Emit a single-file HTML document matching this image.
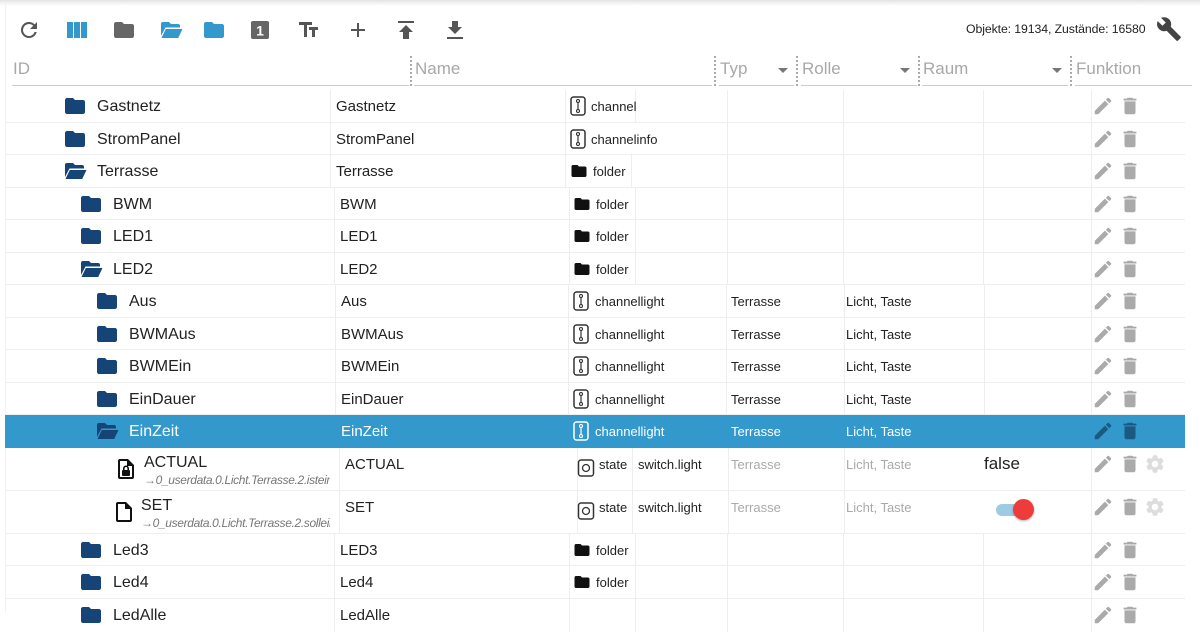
<!DOCTYPE html>
<html><head><meta charset="utf-8"><style>
*{box-sizing:border-box;margin:0;padding:0}
body{width:1200px;height:613px;overflow:hidden;background:#fff;font-family:"Liberation Sans",Roboto,sans-serif;color:#222;position:relative}
.top{position:absolute;left:0;top:0;width:1200px;height:6px;background:linear-gradient(#e4e4e4,#fff)}
.ab{position:absolute}
.tb svg{position:absolute;top:18px;width:24px;height:24px}
.hd{position:absolute;top:58px;height:28px;font-size:17px;color:#a8a8a8;border-bottom:1.5px solid #ccc;padding-left:1px;padding-top:1px}
.sep{position:absolute;top:56px;height:30px;border-left:2px dotted #aaa}
.arr{position:absolute;top:68px;width:0;height:0;border-left:5px solid transparent;border-right:5px solid transparent;border-top:5px solid #777}
.row{position:absolute;left:5px;width:1180px;border-bottom:1px solid #eee}
.row .c{position:absolute;top:0;bottom:0;border-left:1px solid #eee}
.row span{position:absolute;white-space:nowrap}
.nm{font-size:16px;top:8px!important}
.sm{font-size:13px}
.gr{color:#aaa}
.sel{background:#3399cc;color:#fff}
.fi{position:absolute;width:24px;height:24px}
.ti{position:absolute;width:18px;height:22px}
.act svg{position:absolute;width:22px;height:22px}
.sub{font-size:12px;font-style:italic;color:#777;overflow:hidden;letter-spacing:-0.35px}
</style></head><body>
<svg width="0" height="0" style="position:absolute">
<defs>
<symbol id="fold" viewBox="0 0 24 24"><path d="M10 4H4c-1.1 0-2 .9-2 2v12c0 1.1.9 2 2 2h16c1.1 0 2-.9 2-2V8c0-1.1-.9-2-2-2h-8l-2-2z"/></symbol>
<symbol id="open" viewBox="0 0 24 24"><path d="M2 6a2 2 0 0 1 2-2h6l2 2h7a2 2 0 0 1 2 2v1.5H6.5L2 18z M6.8 11H23.5l-4.3 9H2.5z"/></symbol>
<symbol id="chan" viewBox="0 0 18 22"><rect x="2" y="2" width="14" height="18" rx="2.5" fill="none" stroke="currentColor" stroke-width="1.5"/><circle cx="9" cy="6" r="1.5" fill="none" stroke="currentColor" stroke-width="1.1"/><circle cx="9" cy="16" r="1.5" fill="none" stroke="currentColor" stroke-width="1.1"/><path d="M9 7.5V14.5" stroke="currentColor" stroke-width="1.2"/></symbol>
<symbol id="state" viewBox="0 0 18 22"><rect x="1.5" y="3" width="15" height="16" rx="2.5" fill="none" stroke="currentColor" stroke-width="1.5"/><circle cx="9" cy="11" r="3.5" fill="none" stroke="currentColor" stroke-width="1.3"/></symbol>
<symbol id="pen" viewBox="0 0 24 24"><path d="M3 17.25V21h3.75L17.81 9.94l-3.75-3.75L3 17.25zM20.71 7.04a1 1 0 0 0 0-1.41l-2.34-2.34a1 1 0 0 0-1.41 0l-1.83 1.830 3.75 3.75 1.83-1.83z"/></symbol>
<symbol id="del" viewBox="0 0 24 24"><path d="M6 19c0 1.1.9 2 2 2h8c1.1 0 2-.9 2-2V7H6v12zM19 4h-3.5l-1-1h-5l-1 1H5v2h14V4z"/></symbol>
<symbol id="gear" viewBox="0 0 24 24"><path d="M19.14 12.94a7.1 7.1 0 0 0 0-1.88l2.03-1.58a.5.5 0 0 0 .12-.61l-1.920-3.32a.5.5 0 0 0-.59-.22l-2.39.96a7 7 0 0 0-1.62-.94l-.36-2.54A.5.5 0 0 0 13.9 2.4h-3.84a.5.5 0 0 0-.48.41l-.36 2.54a7.4 7.4 0 0 0-1.62.94l-2.39-.96a.5.5 0 0 0-.59.22L2.7 8.87a.5.5 0 0 0 .12.61l2.03 1.58a7.1 7.1 0 0 0 0 1.88l-2.03 1.58a.5.5 0 0 0-.12.61l1.92 3.32c.12.22.37.29.59.22l2.39-.96c.5.38 1.04.7 1.62.94l.36 2.54c.05.24.25.41.48.41h3.84c.24 0 .44-.17.47-.41l.36-2.54a7 7 0 0 0 1.62-.94l2.39.96c.22.08.47 0 .59-.22l1.92-3.32a.5.5 0 0 0-.12-.61zM12 15.6A3.6 3.6 0 1 1 12 8.4a3.6 3.6 0 0 1 0 7.2z"/></symbol>
<symbol id="file" viewBox="0 0 24 24"><path d="M6 2h8l6 6v12a2 2 0 0 1-2 2H6a2 2 0 0 1-2-2V4a2 2 0 0 1 2-2zm0 2v16h12V9h-5V4z"/></symbol>
<symbol id="lockf" viewBox="0 0 24 24"><path d="M6 2h8l6 6v12a2 2 0 0 1-2 2H6a2 2 0 0 1-2-2V4a2 2 0 0 1 2-2zm0 2v16h12V9h-5V4z"/><rect x="8" y="13" width="8" height="6" rx="1"/><path d="M9.8 13v-1.5a2.2 2.2 0 0 1 4.4 0V13" fill="none" stroke="#000" stroke-width="1.5"/></symbol>
</defs></svg>
<div class="top"></div>
<div class="ab" style="left:5px;top:4px;width:1185px;height:609px;border-left:1px solid #f2f2f2"></div>
<div class="tb">
<svg style="left:17px" viewBox="0 0 24 24" fill="#555"><path d="M17.65 6.35A7.96 7.96 0 0 0 12 4a8 8 0 1 0 7.73 10h-2.08A6 6 0 1 1 12 6c1.66 0 3.14.69 4.22 1.78L13 11h7V4l-2.35 2.35z"/></svg>
<svg style="left:65px" viewBox="0 0 24 24" fill="#3399cc"><rect x="2" y="4" width="6" height="16"/><rect x="9" y="4" width="6" height="16"/><rect x="16" y="4" width="6" height="16"/></svg>
<svg style="left:112px" viewBox="0 0 24 24" fill="#666"><use href="#fold"/></svg>
<svg style="left:159px" viewBox="0 0 24 24" fill="#3399cc"><use href="#open"/></svg>
<svg style="left:202px" viewBox="0 0 24 24" fill="#3399cc"><use href="#fold"/></svg>
<svg style="left:248px" viewBox="0 0 24 24"><rect x="3" y="3" width="18" height="18" rx="2" fill="#666"/><text x="12" y="17.5" font-size="14" font-weight="bold" fill="#fff" text-anchor="middle" font-family="Liberation Sans">1</text></svg>
<svg style="left:297px" viewBox="0 0 24 24" fill="#555"><path d="M2 4v3h5v12h3V7h5V4H2zm19 5h-9v3h3v7h3v-7h3V9z"/></svg>
<svg style="left:346px" viewBox="0 0 24 24" fill="#555"><path d="M19 13h-6v6h-2v-6H5v-2h6V5h2v6h6v2z"/></svg>
<svg style="left:394px" viewBox="0 0 24 24" fill="#555"><path d="M4 3h16v2H4zM12 7l-7 7h4v7h6v-7h4z"/></svg>
<svg style="left:443px" viewBox="0 0 24 24" fill="#555"><path d="M19 9h-4V3H9v6H5l7 7 7-7zM4 19v2h16v-2z"/></svg>
</div>
<div class="ab" style="left:966px;top:22px;font-size:12.3px;color:#222;letter-spacing:-0.1px">Objekte: 19134, Zustände: 16580</div>
<svg class="ab" style="left:1156px;top:16px;width:26px;height:26px" viewBox="0 0 24 24" fill="#444"><path d="M22.7 19l-9.1-9.1c.9-2.3.4-5-1.5-6.9-2-2-5-2.4-7.4-1.3L9 6 6 9 1.6 4.7C.4 7.1.9 10.1 2.9 12.1c1.9 1.9 4.6 2.4 6.9 1.5l9.1 9.1c.4.4 1 .4 1.4 0l2.3-2.3c.5-.4.5-1.1.1-1.4z"/></svg>

<div class="hd" style="left:12px;width:397px">ID</div>
<div class="sep" style="left:410px"></div>
<div class="hd" style="left:414px;width:298px">Name</div>
<div class="sep" style="left:714px"></div>
<div class="hd" style="left:719px;width:75px">Typ</div><div class="arr" style="left:778px"></div>
<div class="sep" style="left:796px"></div>
<div class="hd" style="left:801px;width:116px">Rolle</div><div class="arr" style="left:900px"></div>
<div class="sep" style="left:918px"></div>
<div class="hd" style="left:922px;width:146px">Raum</div><div class="arr" style="left:1052px"></div>
<div class="sep" style="left:1070px"></div>
<div class="hd" style="left:1075px;width:117px">Funktion</div>

<div class="row" style="top:90px;height:33px"><div class="c" style="left:325px"></div><div class="c" style="left:560px"></div><div class="c" style="left:630px"></div><div class="c" style="left:722px"></div><div class="c" style="left:838px"></div><div class="c" style="left:978px"></div><div class="c" style="left:1086px"></div>
<svg class="fi" style="left:58px;top:4px" fill="#164477"><use href="#fold"/></svg><span class="nm" style="left:92px">Gastnetz</span><span class="nm" style="left:331px;font-size:15px">Gastnetz</span><svg class="ti" style="left:564px;top:5px;color:#333"><use href="#chan"/></svg><span class="sm" style="left:586px;top:9px">channel</span>
<div class="act"><svg style="left:1087px;top:5px" fill="#aaa"><use href="#pen"/></svg><svg style="left:1114px;top:5px" fill="#aaa"><use href="#del"/></svg></div></div>

<div class="row" style="top:123px;height:32px"><div class="c" style="left:325px"></div><div class="c" style="left:560px"></div><div class="c" style="left:722px"></div><div class="c" style="left:838px"></div><div class="c" style="left:978px"></div><div class="c" style="left:1086px"></div>
<svg class="fi" style="left:58px;top:4px" fill="#164477"><use href="#fold"/></svg><span class="nm" style="left:92px">StromPanel</span><span class="nm" style="left:331px;font-size:15px">StromPanel</span><svg class="ti" style="left:564px;top:5px;color:#333"><use href="#chan"/></svg><span class="sm" style="left:586px;top:9px">channelinfo</span>
<div class="act"><svg style="left:1087px;top:5px" fill="#aaa"><use href="#pen"/></svg><svg style="left:1114px;top:5px" fill="#aaa"><use href="#del"/></svg></div></div>

<div class="row" style="top:155px;height:33px"><div class="c" style="left:325px"></div><div class="c" style="left:560px"></div><div class="c" style="left:626px"></div><div class="c" style="left:722px"></div><div class="c" style="left:838px"></div><div class="c" style="left:978px"></div><div class="c" style="left:1086px"></div>
<svg class="fi" style="left:58px;top:4px" fill="#164477"><use href="#open"/></svg><span class="nm" style="left:92px">Terrasse</span><span class="nm" style="left:331px;font-size:15px">Terrasse</span><svg class="fi" style="left:565px;top:7px;width:18px;height:18px" fill="#111"><use href="#fold"/></svg><span class="sm" style="left:588px;top:9px">folder</span>
<div class="act"><svg style="left:1087px;top:5px" fill="#aaa"><use href="#pen"/></svg><svg style="left:1114px;top:5px" fill="#aaa"><use href="#del"/></svg></div></div>

<div class="row" style="top:188px;height:32px"><div class="c" style="left:329px"></div><div class="c" style="left:564px"></div><div class="c" style="left:630px"></div><div class="c" style="left:722px"></div><div class="c" style="left:838px"></div><div class="c" style="left:978px"></div><div class="c" style="left:1086px"></div>
<svg class="fi" style="left:74px;top:4px" fill="#164477"><use href="#fold"/></svg><span class="nm" style="left:108px">BWM</span><span class="nm" style="left:335px;font-size:15px">BWM</span><svg class="fi" style="left:568px;top:7px;width:18px;height:18px" fill="#111"><use href="#fold"/></svg><span class="sm" style="left:591px;top:9px">folder</span>
<div class="act"><svg style="left:1087px;top:5px" fill="#aaa"><use href="#pen"/></svg><svg style="left:1114px;top:5px" fill="#aaa"><use href="#del"/></svg></div></div>

<div class="row" style="top:220px;height:33px"><div class="c" style="left:329px"></div><div class="c" style="left:564px"></div><div class="c" style="left:630px"></div><div class="c" style="left:722px"></div><div class="c" style="left:838px"></div><div class="c" style="left:978px"></div><div class="c" style="left:1086px"></div>
<svg class="fi" style="left:74px;top:4px" fill="#164477"><use href="#fold"/></svg><span class="nm" style="left:108px">LED1</span><span class="nm" style="left:335px;font-size:15px">LED1</span><svg class="fi" style="left:568px;top:7px;width:18px;height:18px" fill="#111"><use href="#fold"/></svg><span class="sm" style="left:591px;top:9px">folder</span>
<div class="act"><svg style="left:1087px;top:5px" fill="#aaa"><use href="#pen"/></svg><svg style="left:1114px;top:5px" fill="#aaa"><use href="#del"/></svg></div></div>

<div class="row" style="top:253px;height:32px"><div class="c" style="left:329px"></div><div class="c" style="left:564px"></div><div class="c" style="left:630px"></div><div class="c" style="left:722px"></div><div class="c" style="left:838px"></div><div class="c" style="left:978px"></div><div class="c" style="left:1086px"></div>
<svg class="fi" style="left:74px;top:4px" fill="#164477"><use href="#open"/></svg><span class="nm" style="left:108px">LED2</span><span class="nm" style="left:335px;font-size:15px">LED2</span><svg class="fi" style="left:568px;top:7px;width:18px;height:18px" fill="#111"><use href="#fold"/></svg><span class="sm" style="left:591px;top:9px">folder</span>
<div class="act"><svg style="left:1087px;top:5px" fill="#aaa"><use href="#pen"/></svg><svg style="left:1114px;top:5px" fill="#aaa"><use href="#del"/></svg></div></div>

<div class="row" style="top:285px;height:33px"><div class="c" style="left:330px"></div><div class="c" style="left:563px"></div><div class="c" style="left:721px"></div><div class="c" style="left:839px"></div><div class="c" style="left:979px"></div><div class="c" style="left:1086px"></div>
<svg class="fi" style="left:90px;top:4px" fill="#164477"><use href="#fold"/></svg><span class="nm" style="left:124px">Aus</span><span class="nm" style="left:336px;font-size:15px">Aus</span><svg class="ti" style="left:567px;top:5px;color:#333"><use href="#chan"/></svg><span class="sm" style="left:590px;top:9px">channellight</span><span class="sm" style="left:726px;top:9px">Terrasse</span><span class="sm" style="left:841px;top:9px">Licht, Taste</span>
<div class="act"><svg style="left:1087px;top:5px" fill="#aaa"><use href="#pen"/></svg><svg style="left:1114px;top:5px" fill="#aaa"><use href="#del"/></svg></div></div>

<div class="row" style="top:318px;height:32px"><div class="c" style="left:330px"></div><div class="c" style="left:563px"></div><div class="c" style="left:721px"></div><div class="c" style="left:839px"></div><div class="c" style="left:979px"></div><div class="c" style="left:1086px"></div>
<svg class="fi" style="left:90px;top:4px" fill="#164477"><use href="#fold"/></svg><span class="nm" style="left:124px">BWMAus</span><span class="nm" style="left:336px;font-size:15px">BWMAus</span><svg class="ti" style="left:567px;top:5px;color:#333"><use href="#chan"/></svg><span class="sm" style="left:590px;top:9px">channellight</span><span class="sm" style="left:726px;top:9px">Terrasse</span><span class="sm" style="left:841px;top:9px">Licht, Taste</span>
<div class="act"><svg style="left:1087px;top:5px" fill="#aaa"><use href="#pen"/></svg><svg style="left:1114px;top:5px" fill="#aaa"><use href="#del"/></svg></div></div>

<div class="row" style="top:350px;height:33px"><div class="c" style="left:330px"></div><div class="c" style="left:563px"></div><div class="c" style="left:721px"></div><div class="c" style="left:839px"></div><div class="c" style="left:979px"></div><div class="c" style="left:1086px"></div>
<svg class="fi" style="left:90px;top:4px" fill="#164477"><use href="#fold"/></svg><span class="nm" style="left:124px">BWMEin</span><span class="nm" style="left:336px;font-size:15px">BWMEin</span><svg class="ti" style="left:567px;top:5px;color:#333"><use href="#chan"/></svg><span class="sm" style="left:590px;top:9px">channellight</span><span class="sm" style="left:726px;top:9px">Terrasse</span><span class="sm" style="left:841px;top:9px">Licht, Taste</span>
<div class="act"><svg style="left:1087px;top:5px" fill="#aaa"><use href="#pen"/></svg><svg style="left:1114px;top:5px" fill="#aaa"><use href="#del"/></svg></div></div>

<div class="row" style="top:383px;height:32px"><div class="c" style="left:330px"></div><div class="c" style="left:563px"></div><div class="c" style="left:721px"></div><div class="c" style="left:839px"></div><div class="c" style="left:979px"></div><div class="c" style="left:1086px"></div>
<svg class="fi" style="left:90px;top:4px" fill="#164477"><use href="#fold"/></svg><span class="nm" style="left:124px">EinDauer</span><span class="nm" style="left:336px;font-size:15px">EinDauer</span><svg class="ti" style="left:567px;top:5px;color:#333"><use href="#chan"/></svg><span class="sm" style="left:590px;top:9px">channellight</span><span class="sm" style="left:726px;top:9px">Terrasse</span><span class="sm" style="left:841px;top:9px">Licht, Taste</span>
<div class="act"><svg style="left:1087px;top:5px" fill="#aaa"><use href="#pen"/></svg><svg style="left:1114px;top:5px" fill="#aaa"><use href="#del"/></svg></div></div>

<div class="row sel" style="top:415px;height:33px;border-bottom:none">
<svg class="fi" style="left:90px;top:4px" fill="#164477"><use href="#open"/></svg><span class="nm" style="left:124px">EinZeit</span><span class="nm" style="left:336px;font-size:15px">EinZeit</span><svg class="ti" style="left:567px;top:5px;color:#fff"><use href="#chan"/></svg><span class="sm" style="left:590px;top:9px">channellight</span><span class="sm" style="left:726px;top:9px">Terrasse</span><span class="sm" style="left:841px;top:9px">Licht, Taste</span>
<div class="act"><svg style="left:1087px;top:5px" fill="#1a5a80"><use href="#pen"/></svg><svg style="left:1114px;top:5px" fill="#1a5a80"><use href="#del"/></svg></div></div>

<div class="row" style="top:448px;height:43px"><div class="c" style="left:334px"></div><div class="c" style="left:572px"></div><div class="c" style="left:627px"></div><div class="c" style="left:723px"></div><div class="c" style="left:839px"></div><div class="c" style="left:1086px"></div>
<svg class="fi" style="left:109px;top:9px" fill="#111"><use href="#lockf"/></svg><span class="nm" style="left:139px;top:6px!important">ACTUAL</span><span class="sub" style="left:139px;top:25px;width:186px">→0_userdata.0.Licht.Terrasse.2.isteinzeit</span><span class="nm" style="left:340px;font-size:15px">ACTUAL</span><svg class="ti" style="left:572px;top:9px;color:#333"><use href="#state"/></svg><span class="sm" style="left:594px;top:9px">state</span><span class="sm" style="left:633px;top:9px">switch.light</span><span class="sm gr" style="left:726px;top:9px">Terrasse</span><span class="sm gr" style="left:841px;top:9px">Licht, Taste</span><span style="left:979px;top:6px;font-size:17px">false</span>
<div class="act"><svg style="left:1087px;top:5px" fill="#aaa"><use href="#pen"/></svg><svg style="left:1114px;top:5px" fill="#aaa"><use href="#del"/></svg><svg style="left:1139px;top:5px" fill="#ddd"><use href="#gear"/></svg></div></div>

<div class="row" style="top:491px;height:43px"><div class="c" style="left:334px"></div><div class="c" style="left:572px"></div><div class="c" style="left:627px"></div><div class="c" style="left:723px"></div><div class="c" style="left:839px"></div><div class="c" style="left:1086px"></div>
<svg class="fi" style="left:107px;top:9px" fill="#111"><use href="#file"/></svg><span class="nm" style="left:136px;top:6px!important">SET</span><span class="sub" style="left:136px;top:25px;width:189px">→0_userdata.0.Licht.Terrasse.2.solleinzeit</span><span class="nm" style="left:340px;font-size:15px">SET</span><svg class="ti" style="left:572px;top:9px;color:#333"><use href="#state"/></svg><span class="sm" style="left:594px;top:9px">state</span><span class="sm" style="left:633px;top:9px">switch.light</span><span class="sm gr" style="left:726px;top:9px">Terrasse</span><span class="sm gr" style="left:841px;top:9px">Licht, Taste</span>
<div class="ab" style="left:991px;top:13px;width:30px;height:12px;border-radius:6px;background:#9ccbe3"></div><div class="ab" style="left:1008px;top:8px;width:21px;height:21px;border-radius:50%;background:#ee3b3b;box-shadow:0 1px 2px rgba(0,0,0,.3)"></div>
<div class="act"><svg style="left:1087px;top:5px" fill="#aaa"><use href="#pen"/></svg><svg style="left:1114px;top:5px" fill="#aaa"><use href="#del"/></svg><svg style="left:1139px;top:5px" fill="#ddd"><use href="#gear"/></svg></div></div>

<div class="row" style="top:534px;height:32px"><div class="c" style="left:329px"></div><div class="c" style="left:564px"></div><div class="c" style="left:630px"></div><div class="c" style="left:722px"></div><div class="c" style="left:838px"></div><div class="c" style="left:978px"></div><div class="c" style="left:1086px"></div>
<svg class="fi" style="left:74px;top:4px" fill="#164477"><use href="#fold"/></svg><span class="nm" style="left:108px">Led3</span><span class="nm" style="left:335px;font-size:15px">LED3</span><svg class="fi" style="left:568px;top:7px;width:18px;height:18px" fill="#111"><use href="#fold"/></svg><span class="sm" style="left:591px;top:9px">folder</span>
<div class="act"><svg style="left:1087px;top:5px" fill="#aaa"><use href="#pen"/></svg><svg style="left:1114px;top:5px" fill="#aaa"><use href="#del"/></svg></div></div>

<div class="row" style="top:566px;height:33px"><div class="c" style="left:329px"></div><div class="c" style="left:564px"></div><div class="c" style="left:630px"></div><div class="c" style="left:722px"></div><div class="c" style="left:838px"></div><div class="c" style="left:978px"></div><div class="c" style="left:1086px"></div>
<svg class="fi" style="left:74px;top:4px" fill="#164477"><use href="#fold"/></svg><span class="nm" style="left:108px">Led4</span><span class="nm" style="left:335px;font-size:15px">Led4</span><svg class="fi" style="left:568px;top:7px;width:18px;height:18px" fill="#111"><use href="#fold"/></svg><span class="sm" style="left:591px;top:9px">folder</span>
<div class="act"><svg style="left:1087px;top:5px" fill="#aaa"><use href="#pen"/></svg><svg style="left:1114px;top:5px" fill="#aaa"><use href="#del"/></svg></div></div>

<div class="row" style="top:599px;height:33px;border:none"><div class="c" style="left:329px"></div><div class="c" style="left:564px"></div><div class="c" style="left:630px"></div><div class="c" style="left:722px"></div><div class="c" style="left:838px"></div><div class="c" style="left:978px"></div><div class="c" style="left:1086px"></div>
<svg class="fi" style="left:74px;top:4px" fill="#164477"><use href="#fold"/></svg><span class="nm" style="left:108px">LedAlle</span><span class="nm" style="left:335px;font-size:15px">LedAlle</span>
<div class="act"><svg style="left:1087px;top:5px" fill="#aaa"><use href="#pen"/></svg><svg style="left:1114px;top:5px" fill="#aaa"><use href="#del"/></svg></div></div>
</body></html>
